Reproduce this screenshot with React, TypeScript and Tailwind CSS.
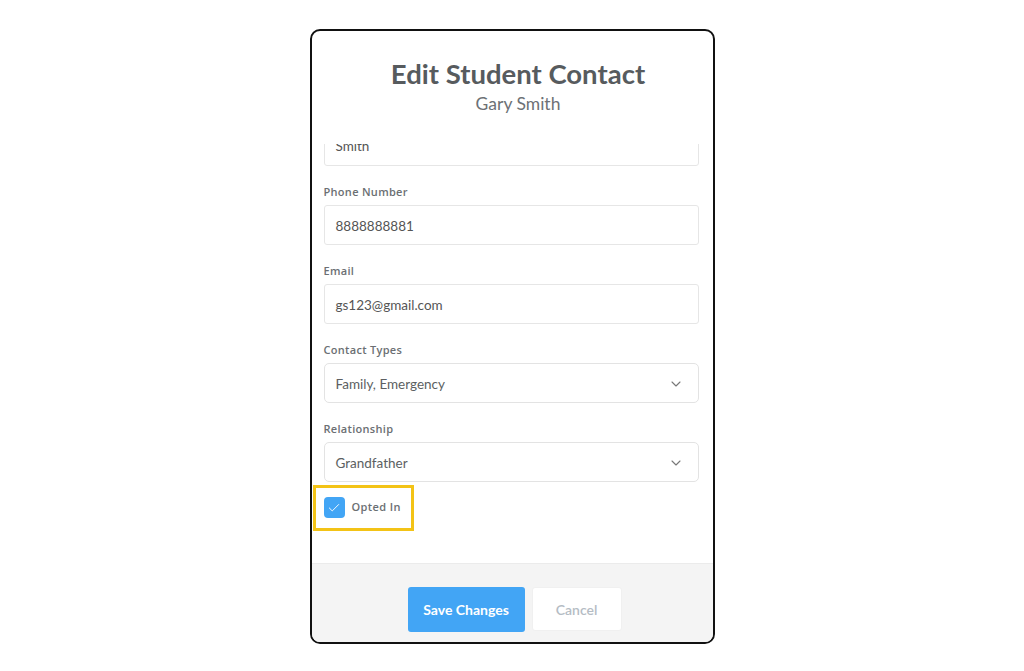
import { ChevronDown, Check } from 'lucide-react'

const fields = [
  { label: 'Phone Number', value: '8888888881' },
  { label: 'Email', value: 'gs123@gmail.com' },
]

const selects = [
  { label: 'Contact Types', value: 'Family, Emergency' },
  { label: 'Relationship', value: 'Grandfather' },
]

export default function App() {
  return (
    <div className="w-full min-h-[671px] bg-white flex justify-center pt-[29px]" style={{ fontFamily: 'Lato, "Open Sans", sans-serif' }}>
      <div className="w-[405px] h-[615px] border-2 border-[#111] rounded-[10px] overflow-hidden flex flex-col bg-white">
        {/* header */}
        <div className="h-[113px] shrink-0 flex flex-col items-center pt-[26px] pl-3">
          <h1 className="text-[27.5px] leading-[33px] font-bold text-[#575b5e]">Edit Student Contact</h1>
          <p className="text-[17.5px] leading-[22px] text-[#6d7175] mt-[3px]">Gary Smith</p>
        </div>

        {/* scrolled body */}
        <div className="flex-1 overflow-hidden">
          <div className="-mt-[18px] pl-3 pr-[14px]">
            <div className="h-10 border border-[#e6e6e6] rounded-[3px] flex items-center px-[11px] text-[13.5px] text-[#555]">Smith</div>

            {fields.map((f) => (
              <div key={f.label} className="mt-[19px]">
                <div className="text-[11px] leading-[13px] font-semibold text-[#6b6f73] tracking-[0.3px]" style={{ fontFamily: '"Open Sans", sans-serif' }}>{f.label}</div>
                <div className="mt-[7px] h-10 border border-[#e6e6e6] rounded-[3px] flex items-center px-[11px] pt-[2px] text-[13.5px] text-[#555]">{f.value}</div>
              </div>
            ))}

            {selects.map((s) => (
              <div key={s.label} className="mt-[19px]">
                <div className="text-[11px] leading-[13px] font-semibold text-[#6b6f73] tracking-[0.3px]" style={{ fontFamily: '"Open Sans", sans-serif' }}>{s.label}</div>
                <div className="mt-[7px] h-10 border border-[#e3e3e3] rounded-[5px] flex items-center justify-between pl-[11px] pr-[14px] pt-[2px] text-[13.5px] text-[#5c5f62]">
                  <span>{s.value}</span>
                  <ChevronDown size={16} strokeWidth={1.6} className="text-[#777]" />
                </div>
              </div>
            ))}

            <div className="relative mt-[15px] flex items-center gap-[7px] h-[21px]">
              <div className="absolute -left-[11px] -top-[12px] w-[101px] h-[46px] border-[3px] border-[#f3c316]" />
              <div className="w-[21px] h-[21px] rounded-[4px] bg-[#42a5f5] flex items-center justify-center">
                <Check size={14} strokeWidth={1.6} className="text-white" />
              </div>
              <span className="text-[11px] font-semibold text-[#6b6f73] tracking-[0.4px]" style={{ fontFamily: '"Open Sans", sans-serif' }}>Opted In</span>
            </div>
          </div>
        </div>

        {/* footer */}
        <div className="h-[79px] shrink-0 bg-[#f4f4f4] border-t border-[#ebebeb] flex justify-center items-start pt-[23px] pl-[5px] gap-[7px]">
          <button className="w-[117px] h-[45px] rounded-[3px] bg-[#42a5f5] text-white text-[14px] font-bold">Save Changes</button>
          <button className="w-[90px] h-[44px] rounded-[3px] bg-white border border-[#f0f0f0] text-[#b5bcc4] text-[14px] font-semibold">Cancel</button>
        </div>
      </div>
    </div>
  )
}
